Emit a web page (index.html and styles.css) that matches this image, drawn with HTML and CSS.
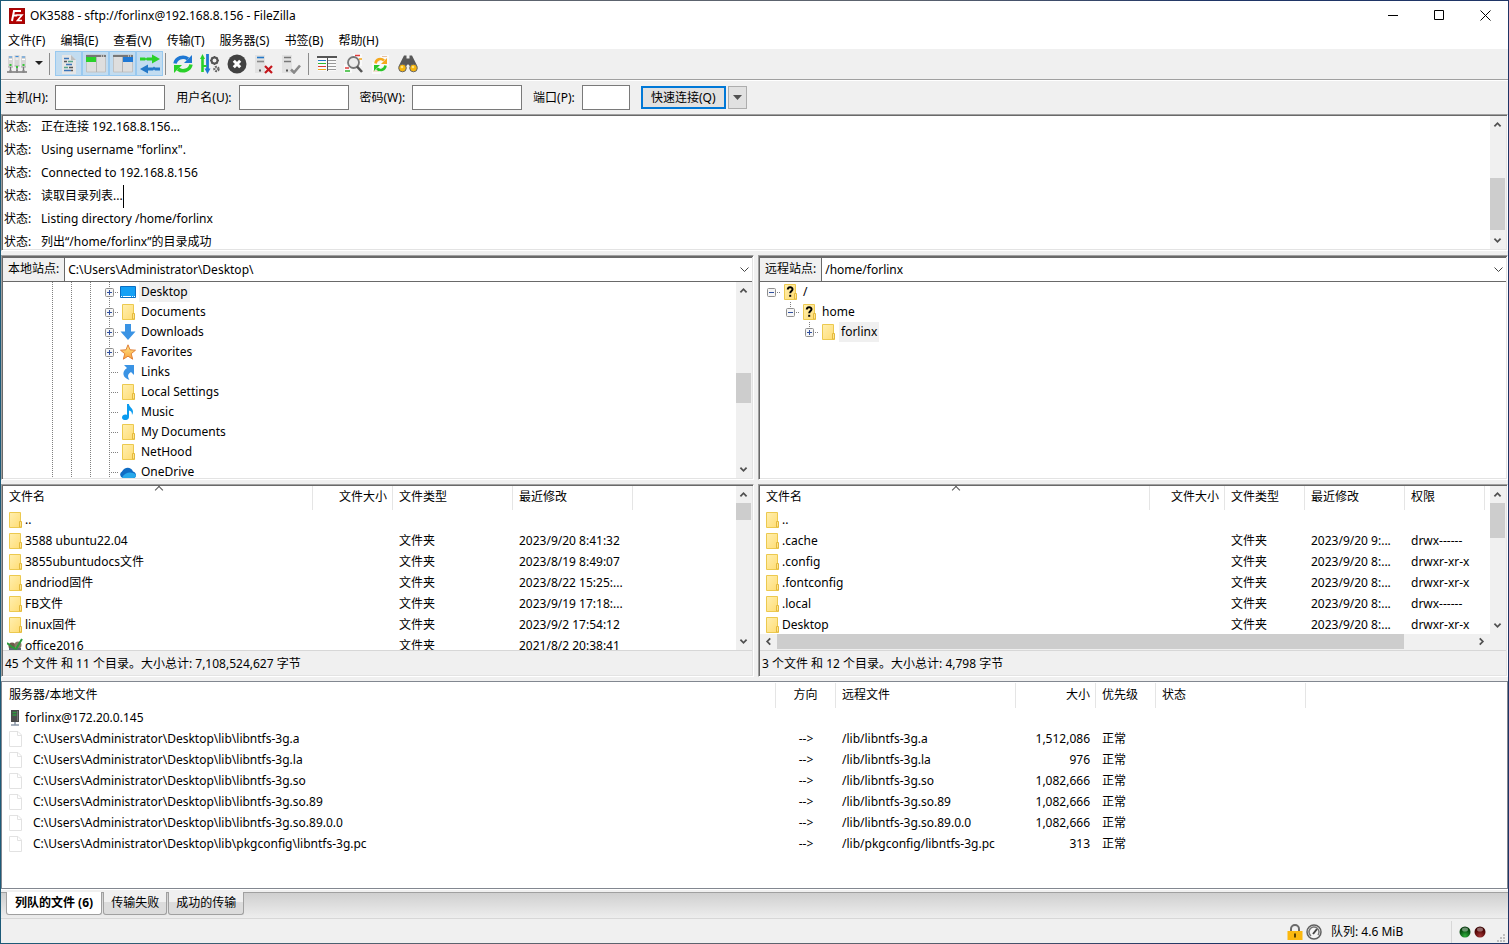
FILE: index.html
```
<!DOCTYPE html>
<html lang="zh-CN">
<head>
  <meta charset="UTF-8" />
  <meta name="viewport" content="width=device-width, initial-scale=1.0"/>
  <title>OK3588 - sftp://forlinx@192.168.8.156 - FileZilla</title>
  <link rel="stylesheet" href="styles.css">
</head>
<body>

  <!-- shared icons -->
  <svg class="defs" width="0" height="0" aria-hidden="true">
    <defs>
      <linearGradient id="gFolder" x1="0" y1="0" x2="1" y2="1">
        <stop offset="0" stop-color="#ffefb0"/><stop offset="1" stop-color="#ffdc72"/>
      </linearGradient>
      <linearGradient id="gStar" x1="0" y1="0" x2="0" y2="1">
        <stop offset="0" stop-color="#ffe98a"/><stop offset="1" stop-color="#f9a13a"/>
      </linearGradient>
      <radialGradient id="gGreen" cx="0.5" cy="0.85" r="0.8">
        <stop offset="0" stop-color="#2fae3c"/><stop offset="0.6" stop-color="#0a5a14"/><stop offset="1" stop-color="#05380b"/>
      </radialGradient>
      <radialGradient id="gRed" cx="0.5" cy="0.85" r="0.8">
        <stop offset="0" stop-color="#a03434"/><stop offset="0.6" stop-color="#5c0a0a"/><stop offset="1" stop-color="#3a0404"/>
      </radialGradient>
      <symbol id="folder" viewBox="0 0 16 16">
        <path d="M2.5.5h11v10h1v5h-12z" fill="url(#gFolder)" stroke="#ecc94f"/>
        <path d="M12.5 15V9.500h2V15z" fill="#ffe590" stroke="#e3b93c"/>
      </symbol>
      <symbol id="unknown" viewBox="0 0 16 16">
        <path d="M2.500.5h11v10h1v5h-12z" fill="url(#gFolder)" stroke="#ecc94f"/>
        <path d="M12.500 15V9.500h2V15z" fill="#ffe590" stroke="#e3b93c"/>
        <path d="M5.800 5.500C5.800 2.500 10.500 2.500 10.500 5.200 10.500 7 8.200 7 8.200 9.300" fill="none" stroke="#000" stroke-width="2"/>
        <path d="M7.200 10.800h2v2h-2z"/>
      </symbol>
      <symbol id="file" viewBox="0 0 16 16">
        <path d="M2.500.5h8.500l3.500 3.500v11.500h-12z" fill="#fff" stroke="#e2e2e2"/>
        <path d="M10.500.5v4h4" fill="none" stroke="#e2e2e2"/>
      </symbol>
      <symbol id="up" viewBox="0 0 17 17"><path d="M5 10.500l3.500-3.500 3.500 3.500" fill="none" stroke="#505050" stroke-width="2"/></symbol>
      <symbol id="down" viewBox="0 0 17 17"><path d="M5 6.500l3.500 3.500 3.500-3.500" fill="none" stroke="#505050" stroke-width="2"/></symbol>
      <symbol id="left" viewBox="0 0 17 17"><path d="M10.500 5l-3.500 3.500 3.500 3.500" fill="none" stroke="#505050" stroke-width="2"/></symbol>
      <symbol id="right" viewBox="0 0 17 17"><path d="M6.500 5l3.500 3.500-3.500 3.500" fill="none" stroke="#505050" stroke-width="2"/></symbol>
      <symbol id="plus" viewBox="0 0 9 9">
        <rect x=".5" y=".5" width="8" height="8" rx="1" fill="#f6f6f6" stroke="#8f8f8f"/>
        <path d="M2 4.500h5M4.500 2v5" stroke="#2f4f9f"/>
      </symbol>
      <symbol id="minus" viewBox="0 0 9 9">
        <rect x=".5" y=".5" width="8" height="8" rx="1" fill="#f6f6f6" stroke="#8f8f8f"/>
        <path d="M2 4.500h5" stroke="#2f4f9f"/>
      </symbol>
    </defs>
  </svg>

  <header class="titlebar">
    <svg class="logo" width="16" height="16" viewBox="0 0 16 16">
      <rect width="16" height="16" fill="#b30000"/>
      <rect x=".5" y=".5" width="15" height="15" fill="none" stroke="#8a1010" stroke-dasharray="1 1"/>
      <path d="M3 13L5 3h7M4.200 7.500h4" fill="none" stroke="#fff" stroke-width="2"/>
      <path d="M7.500 7h5.500L8.500 12.500h4.500" fill="none" stroke="#fff" stroke-width="1.600"/>
    </svg>
    <h1>OK3588 - sftp://forlinx@192.168.8.156 - FileZilla</h1>
    <div class="window-buttons">
      <button aria-label="最小化"><svg width="11" height="11"><path d="M0 5.500h10" stroke="#000"/></svg></button>
      <button aria-label="最大化"><svg width="11" height="11"><path d="M.5.5h9v9h-9z" fill="none" stroke="#000"/></svg></button>
      <button aria-label="关闭"><svg width="11" height="11"><path d="M.5.5l10 10M10.500.5l-10 10" stroke="#000"/></svg></button>
    </div>
  </header>

  <nav class="menubar">
    <button>文件(F)</button>
    <button>编辑(E)</button>
    <button>查看(V)</button>
    <button>传输(T)</button>
    <button>服务器(S)</button>
    <button>书签(B)</button>
    <button>帮助(H)</button>
  </nav>

  <div class="toolbar">
    <button aria-label="站点管理器">
      <svg width="20" height="20" viewBox="0 0 20 20">
        <path d="M1 2h5v11H1zM7.500 1h5v11h-5zM14 2h5v11h-5z" fill="#d6d6d6"/>
        <path d="M2 3h3M8.500 2.500h3M15 3h3" stroke="#3b8ede"/>
        <path d="M2 5.500h3M8.500 5h3M15 5.500h3" stroke="#fff"/>
        <path d="M1 13h5M7.500 12h5M14 13h5" stroke="#a9a9a9"/>
        <path d="M3.500 13v5M10 12v6M16.500 13v5M0 18h20" stroke="#777" stroke-width="1.400"/>
        <path d="M3.500 10v2M10 12v2M16.500 10v2" stroke="#35c435" stroke-width="2"/>
        <path d="M2.500 16h2v3h-2zM9 16h2v3H9zM15.500 16h2v3h-2z" fill="#888"/>
      </svg>
    </button>
    <button class="drop" aria-label="打开站点列表"><svg width="8" height="5"><path d="M0 0h8L4 4z" fill="#222"/></svg></button>
    <span class="sep"></span>
    <div class="toggles">
      <button class="on" aria-label="消息日志">
        <svg width="20" height="20" viewBox="0 0 20 20">
          <path d="M3 1h9l5 5v14H3z" fill="#e6e6e6"/><path d="M12 1l5 5h-5z" fill="#bdbdbd"/>
          <path d="M5 4.500h5M7 10.500h6M5 16.500h7" stroke="#3b74b8" stroke-width="1.500"/>
          <path d="M5 7.500h3M10 13.500h4" stroke="#555" stroke-width="1.500"/>
          <path d="M9 7.500h5M5 13.500h4" stroke="#58a68c" stroke-width="1.500"/>
          <path d="M12 16.500h2" stroke="#555" stroke-width="1.500"/>
        </svg>
      </button>
      <button class="on" aria-label="本地目录树">
        <svg width="20" height="20" viewBox="0 0 20 20">
          <path d="M.5 1h19v17H.5z" fill="#dedede" stroke="#c2c2c2"/><path d="M0 1h20v2H0z" fill="#777"/>
          <path d="M15 2h1M17 2h1" stroke="#fff"/><path d="M0 3h10v5H0z" fill="#2ad12a"/><path d="M10.500 3v15" stroke="#b4b4b4"/>
        </svg>
      </button>
      <button class="on" aria-label="远程目录树">
        <svg width="20" height="20" viewBox="0 0 20 20">
          <path d="M.5 1h19v17H.5z" fill="#dedede" stroke="#c2c2c2"/><path d="M0 1h20v2H0z" fill="#777"/>
          <path d="M15 2h1M17 2h1" stroke="#fff"/><path d="M10 3h10v5H10z" fill="#1f78d4"/><path d="M9.500 3v15" stroke="#b4b4b4"/>
        </svg>
      </button>
      <button class="on" aria-label="传输队列">
        <svg width="20" height="20" viewBox="0 0 20 20">
          <path d="M0 3.500h5l1 1 1-1h5V.5l8 4.500-8 4.500v-3H7l-1-1-1 1H0z" fill="#2ad12a"/>
          <path d="M20 13.500h-5l-1-1-1 1H8v-3L0 15l8 4.500v-3h5l1-1 1 1h5z" fill="#2478c8"/>
        </svg>
      </button>
    </div>
    <span class="sep"></span>
    <button aria-label="刷新">
      <svg width="20" height="20" viewBox="0 0 20 20">
        <path d="M2 9.500A8 7.500 0 0 1 15 5" fill="none" stroke="#1f78d4" stroke-width="3.500"/><path d="M19 1v8h-8z" fill="#1f78d4"/>
        <path d="M18 10.500A8 7.500 0 0 1 5 15" fill="none" stroke="#2ad12a" stroke-width="3.500"/><path d="M1 19v-8h8z" fill="#2ad12a"/>
      </svg>
    </button>
    <button aria-label="处理队列">
      <svg width="20" height="20" viewBox="0 0 20 20">
        <path d="M2.500 3v15" stroke="#2ad12a" stroke-width="2.600"/><path d="M0 5l2.500-5L5 5z" fill="#2ad12a"/>
        <path d="M7.500 0v17" stroke="#1f78d4" stroke-width="2.800"/><path d="M4.500 14.500h6L7.500 20z" fill="#1f78d4"/>
        <path d="M2.500 12h4" stroke="#2ad12a" stroke-width="2"/>
        <circle cx="14.500" cy="6.500" r="3" fill="none" stroke="#555" stroke-width="2"/>
        <path d="M14.500 2v2M14.500 9v2M10 6.500h2M17 6.500h2M11.500 3.500l1.500 1.500M16 8l1.500 1.500M17.500 3.500L16 5M13 8l-1.500 1.500" stroke="#555" stroke-width="1.500"/>
        <circle cx="16.500" cy="15" r="2" fill="none" stroke="#666" stroke-width="2.400" stroke-dasharray="1.600 .8"/>
      </svg>
    </button>
    <button aria-label="取消">
      <svg width="20" height="20" viewBox="0 0 20 20">
        <circle cx="10" cy="10" r="9.500" fill="#424242"/>
        <path d="M6.800 6.800l6.400 6.400M13.200 6.800l-6.400 6.400" stroke="#fff" stroke-width="3"/>
      </svg>
    </button>
    <button aria-label="断开连接">
      <svg width="20" height="20" viewBox="0 0 20 20">
        <path d="M1 1h10v18H1z" fill="#e2e2e2"/><path d="M3 3.500h7" stroke="#2478c8" stroke-width="1.600"/><path d="M3 7.500h7" stroke="#888" stroke-width="1.600"/>
        <path d="M5 16.500h2" stroke="#555" stroke-width="2"/>
        <path d="M11 12l7 7M18 12l-7 7" stroke="#c4161c" stroke-width="2.200"/>
      </svg>
    </button>
    <button aria-label="重新连接">
      <svg width="20" height="20" viewBox="0 0 20 20">
        <path d="M1 1h10v18H1z" fill="#e2e2e2"/><path d="M3 3.500h7M3 7.500h7" stroke="#777" stroke-width="1.600"/>
        <path d="M5 16.500h2" stroke="#555" stroke-width="2"/>
        <path d="M10 15.500l3 3 6-7" fill="none" stroke="#8a8a8a" stroke-width="2.600"/>
      </svg>
    </button>
    <span class="sep wide"></span>
    <button aria-label="文件名过滤器">
      <svg width="20" height="20" viewBox="0 0 20 20">
        <path d="M1 3h18v14H1z" fill="#fafafa"/><path d="M0 2h20v2H0z" fill="#555"/>
        <path d="M1 6.500h8" stroke="#2478c8"/><path d="M1 9.500h8" stroke="#2fb92f"/>
        <path d="M1 12.500h8" stroke="#d83a3a"/><path d="M1 15.500h8" stroke="#f2a71b"/>
        <path d="M10.500 3v14" stroke="#555"/><path d="M11 6.500h8M11 9.500h8M11 12.500h8M11 15.500h8" stroke="#999"/>
      </svg>
    </button>
    <button aria-label="目录比较">
      <svg width="20" height="20" viewBox="0 0 20 20">
        <path d="M9 0h9v12H9zM0 10h8v9H0z" fill="#fafafa"/>
        <path d="M11 1.500h5" stroke="#e03b3b" stroke-width="1.500"/><path d="M15 5h3" stroke="#f2a71b" stroke-width="1.500"/>
        <path d="M1 14h4" stroke="#e03b3b" stroke-width="1.500"/><path d="M1 17h5" stroke="#2fb92f" stroke-width="1.500"/>
        <circle cx="9.500" cy="8.500" r="5.500" fill="#ececec" stroke="#777" stroke-width="1.800"/>
        <path d="M13 12.500l5 5.500" stroke="#555" stroke-width="2.600"/>
      </svg>
    </button>
    <button aria-label="同步浏览">
      <svg width="20" height="20" viewBox="0 0 20 20">
        <path d="M9 1h9v12H9zM1 8h9v12H1z" fill="#fafafa"/>
        <path d="M11 2.500h5M2 17h6" stroke="#e8c0a0"/>
        <path d="M4.500 9.500A5 5 0 0 1 13 6.500" fill="none" stroke="#f5a81c" stroke-width="2.600"/><path d="M16 4v6h-6z" fill="#f5a81c"/>
        <path d="M14.500 11.500A5 5 0 0 1 6 14.500" fill="none" stroke="#2ac72a" stroke-width="2.600"/><path d="M3 17v-6h6z" fill="#2ac72a"/>
      </svg>
    </button>
    <button aria-label="查找文件">
      <svg width="20" height="20" viewBox="0 0 20 20">
        <path d="M6 1.500h2.500v3h3v-3H14l5.500 11-5 3-4-5h-1l-4 5-5-3z" fill="#585858"/>
        <circle cx="4.500" cy="14" r="3.800" fill="#f7b50c" stroke="#666"/><circle cx="15.500" cy="14" r="3.800" fill="#f7b50c" stroke="#666"/>
        <circle cx="4" cy="13" r="1.300" fill="#ffe27a"/><circle cx="15" cy="13" r="1.300" fill="#ffe27a"/>
      </svg>
    </button>
  </div>

  <form class="quickconnect">
    <label for="host">主机(H):</label>
    <input type="text" id="host" name="host" />
    <label for="user">用户名(U):</label>
    <input type="text" id="user" name="user" />
    <label for="pass">密码(W):</label>
    <input type="password" id="pass" name="pass" />
    <label for="port">端口(P):</label>
    <input type="text" id="port" name="port" class="port" />
    <button type="button" class="connect">快速连接(Q)</button>
    <button type="button" class="history" aria-label="历史记录"><svg width="9" height="5"><path d="M0 0h9L4.500 5z" fill="#505050"/></svg></button>
  </form>

  <main class="panes">
    <section class="sunken log">
      <div class="log-lines">
        <p><span>状态:</span>正在连接 192.168.8.156...</p>
        <p><span>状态:</span>Using username "forlinx".</p>
        <p><span>状态:</span>Connected to 192.168.8.156</p>
        <p><span>状态:</span>读取目录列表...<i class="caret"></i></p>
        <p><span>状态:</span>Listing directory /home/forlinx</p>
        <p><span>状态:</span>列出“/home/forlinx”的目录成功</p>
      </div>
      <div class="scroll">
        <svg><use href="#up"/></svg>
        <div class="track log-track"><b></b></div>
        <svg><use href="#down"/></svg>
      </div>
    </section>

    <div class="split trees">
      <section class="sunken site">
        <div class="path">
          <label for="localPath">本地站点:</label>
          <select id="localPath"><option>C:\Users\Administrator\Desktop\</option></select>
        </div>
        <div class="site-body">
          <ul class="tree local-tree">
            <li><i></i><i></i><i></i><i class="node"><svg><use href="#plus"/></svg></i>
              <svg class="icon" viewBox="0 0 16 16"><path d="M.5 2.500h15v11H.5z" fill="#14a0f5" stroke="#0b6fc4"/><path d="M1 12.500h14" stroke="#fff" stroke-dasharray="1 1 8 1"/></svg>
              <span class="selected">Desktop</span></li>
            <li><i></i><i></i><i></i><i class="node"><svg><use href="#plus"/></svg></i>
              <svg class="icon"><use href="#folder"/></svg><span>Documents</span></li>
            <li><i></i><i></i><i></i><i class="node"><svg><use href="#plus"/></svg></i>
              <svg class="icon" viewBox="0 0 16 16"><path d="M5 0h6v7.500h4.500L8 16 .5 7.500H5z" fill="#3a93e4"/></svg><span>Downloads</span></li>
            <li><i></i><i></i><i></i><i class="node"><svg><use href="#plus"/></svg></i>
              <svg class="icon" viewBox="0 0 16 16"><path d="M8 .8l2 5 5.500.4-4.300 3.500 1.500 5.500L8 12.200l-4.700 3 1.500-5.500L.5 6.200 6 5.800z" fill="url(#gStar)" stroke="#e0803a"/></svg><span>Favorites</span></li>
            <li><i></i><i></i><i></i><i class="node"></i>
              <svg class="icon" viewBox="0 0 16 16"><path d="M4 1h10v10l-3-3c-3 2-4 4-1.500 8C3 14 1 8 7 4z" fill="#3a93e4"/></svg><span>Links</span></li>
            <li><i></i><i></i><i></i><i class="node"></i>
              <svg class="icon"><use href="#folder"/></svg><span>Local Settings</span></li>
            <li><i></i><i></i><i></i><i class="node"></i>
              <svg class="icon" viewBox="0 0 16 16"><path d="M7 0h2c0 3 4 4 4 8 0 1-.5 2-1 3 0-3-1-4-3-4.500V13c0 4-7 4-7 .5C2 11 5 10 7 11z" fill="#0c9cf0"/></svg><span>Music</span></li>
            <li><i></i><i></i><i></i><i class="node"></i>
              <svg class="icon"><use href="#folder"/></svg><span>My Documents</span></li>
            <li><i></i><i></i><i></i><i class="node"></i>
              <svg class="icon"><use href="#folder"/></svg><span>NetHood</span></li>
            <li><i></i><i></i><i></i><i class="node"></i>
              <svg class="icon" viewBox="0 0 16 16"><path d="M3 14a3.500 3.500 0 0 1-1-6.500C4 3 11 2 13 7.500c4 1 4 6.500 0 6.500z" fill="#0f6cc4"/><path d="M2 13.500C5 8 12 7 16 11c0 2-1 3-3 3H3z" fill="#28a8ea"/></svg><span>OneDrive</span></li>
          </ul>
          <div class="scroll">
            <svg><use href="#up"/></svg>
            <div class="track tree-track"><b></b></div>
            <svg><use href="#down"/></svg>
          </div>
        </div>
      </section>

      <section class="sunken site">
        <div class="path">
          <label for="remotePath">远程站点:</label>
          <select id="remotePath"><option>/home/forlinx</option></select>
        </div>
        <div class="site-body">
          <ul class="tree remote-tree">
            <li><i class="node first"><svg><use href="#minus"/></svg></i><svg class="icon"><use href="#unknown"/></svg><span>/</span></li>
            <li><i class="blank"></i><i class="node last"><svg><use href="#minus"/></svg></i><svg class="icon"><use href="#unknown"/></svg><span>home</span></li>
            <li><i class="blank"></i><i class="blank"></i><i class="node last"><svg><use href="#plus"/></svg></i><svg class="icon"><use href="#folder"/></svg><span class="selected">forlinx</span></li>
          </ul>
        </div>
      </section>
    </div>

    <div class="split lists">
      <section class="sunken list">
        <div class="list-body">
          <div class="list-view">
            <table>
              <colgroup><col class="w310"><col class="w80"><col class="w120"><col class="w120"><col></colgroup>
              <thead>
                <tr><th class="sorted">文件名</th><th class="num">文件大小</th><th>文件类型</th><th>最近修改</th><th></th></tr>
              </thead>
              <tbody>
                <tr><td><svg class="icon"><use href="#folder"/></svg>..</td><td></td><td></td><td></td><td></td></tr>
                <tr><td><svg class="icon"><use href="#folder"/></svg>3588 ubuntu22.04</td><td></td><td>文件夹</td><td>2023/9/20 8:41:32</td><td></td></tr>
                <tr><td><svg class="icon"><use href="#folder"/></svg>3855ubuntudocs文件</td><td></td><td>文件夹</td><td>2023/8/19 8:49:07</td><td></td></tr>
                <tr><td><svg class="icon"><use href="#folder"/></svg>andriod固件</td><td></td><td>文件夹</td><td>2023/8/22 15:25:...</td><td></td></tr>
                <tr><td><svg class="icon"><use href="#folder"/></svg>FB文件</td><td></td><td>文件夹</td><td>2023/9/19 17:18:...</td><td></td></tr>
                <tr><td><svg class="icon"><use href="#folder"/></svg>linux固件</td><td></td><td>文件夹</td><td>2023/9/2 17:54:12</td><td></td></tr>
                <tr><td><svg class="icon" viewBox="0 0 16 16"><circle cx="5" cy="8" r="3.500" fill="#6f5a4a"/><circle cx="11" cy="7" r="3.500" fill="#8a7a68"/><path d="M2 10h12v5H2z" fill="#5a6a78"/><path d="M0 5l5 4 4 2 6-10" fill="none" stroke="#2c9a3c" stroke-width="2"/></svg>office2016</td><td></td><td>文件夹</td><td>2021/8/2 20:38:41</td><td></td></tr>
              </tbody>
            </table>
          </div>
          <div class="scroll">
            <svg><use href="#up"/></svg>
            <div class="track local-track"><b></b></div>
            <svg><use href="#down"/></svg>
          </div>
        </div>
        <p class="summary">45 个文件 和 11 个目录。大小总计: 7,108,524,627 字节</p>
      </section>

      <section class="sunken list">
        <div class="list-body">
          <div class="list-view">
            <table>
              <colgroup><col class="w390"><col class="w75"><col class="w80"><col class="w100"><col class="w80"><col></colgroup>
              <thead>
                <tr><th class="sorted">文件名</th><th class="num">文件大小</th><th>文件类型</th><th>最近修改</th><th>权限</th><th></th></tr>
              </thead>
              <tbody>
                <tr><td><svg class="icon"><use href="#folder"/></svg>..</td><td></td><td></td><td></td><td></td><td></td></tr>
                <tr><td><svg class="icon"><use href="#folder"/></svg>.cache</td><td></td><td>文件夹</td><td>2023/9/20 9:...</td><td>drwx------</td><td></td></tr>
                <tr><td><svg class="icon"><use href="#folder"/></svg>.config</td><td></td><td>文件夹</td><td>2023/9/20 8:...</td><td>drwxr-xr-x</td><td></td></tr>
                <tr><td><svg class="icon"><use href="#folder"/></svg>.fontconfig</td><td></td><td>文件夹</td><td>2023/9/20 8:...</td><td>drwxr-xr-x</td><td></td></tr>
                <tr><td><svg class="icon"><use href="#folder"/></svg>.local</td><td></td><td>文件夹</td><td>2023/9/20 8:...</td><td>drwx------</td><td></td></tr>
                <tr><td><svg class="icon"><use href="#folder"/></svg>Desktop</td><td></td><td>文件夹</td><td>2023/9/20 8:...</td><td>drwxr-xr-x</td><td></td></tr>
              </tbody>
            </table>
          </div>
          <div class="scroll">
            <svg><use href="#up"/></svg>
            <div class="track remote-track"><b></b></div>
            <svg><use href="#down"/></svg>
          </div>
        </div>
        <div class="scroll horizontal">
          <svg><use href="#left"/></svg>
          <div class="track bottom-track"><b></b></div>
          <svg><use href="#right"/></svg>
        </div>
        <p class="summary">3 个文件 和 12 个目录。大小总计: 4,798 字节</p>
      </section>
    </div>

    <section class="queue">
      <table>
        <colgroup><col class="w774"><col class="w60"><col class="w180"><col class="w80"><col class="w60"><col class="w150"><col></colgroup>
        <thead>
          <tr><th>服务器/本地文件</th><th class="mid">方向</th><th>远程文件</th><th class="num">大小</th><th>优先级</th><th>状态</th><th></th></tr>
        </thead>
        <tbody>
          <tr><td colspan="7"><svg class="icon" viewBox="0 0 16 16"><path d="M4 0h8v12H4z" fill="#4c4c4c"/><path d="M5.500 2.500h4M5.500 5h4" stroke="#2f9a3f" stroke-width="1.400"/><path d="M10.500 1v10" stroke="#777"/><path d="M8 12v3M4 15h8" stroke="#8b98a8" stroke-width="1.500"/></svg>forlinx@172.20.0.145</td></tr>
          <tr class="file"><td><svg class="icon"><use href="#file"/></svg>C:\Users\Administrator\Desktop\lib\libntfs-3g.a</td><td class="mid">--&gt;</td><td>/lib/libntfs-3g.a</td><td class="num">1,512,086</td><td>正常</td><td></td><td></td></tr>
          <tr class="file"><td><svg class="icon"><use href="#file"/></svg>C:\Users\Administrator\Desktop\lib\libntfs-3g.la</td><td class="mid">--&gt;</td><td>/lib/libntfs-3g.la</td><td class="num">976</td><td>正常</td><td></td><td></td></tr>
          <tr class="file"><td><svg class="icon"><use href="#file"/></svg>C:\Users\Administrator\Desktop\lib\libntfs-3g.so</td><td class="mid">--&gt;</td><td>/lib/libntfs-3g.so</td><td class="num">1,082,666</td><td>正常</td><td></td><td></td></tr>
          <tr class="file"><td><svg class="icon"><use href="#file"/></svg>C:\Users\Administrator\Desktop\lib\libntfs-3g.so.89</td><td class="mid">--&gt;</td><td>/lib/libntfs-3g.so.89</td><td class="num">1,082,666</td><td>正常</td><td></td><td></td></tr>
          <tr class="file"><td><svg class="icon"><use href="#file"/></svg>C:\Users\Administrator\Desktop\lib\libntfs-3g.so.89.0.0</td><td class="mid">--&gt;</td><td>/lib/libntfs-3g.so.89.0.0</td><td class="num">1,082,666</td><td>正常</td><td></td><td></td></tr>
          <tr class="file"><td><svg class="icon"><use href="#file"/></svg>C:\Users\Administrator\Desktop\lib\pkgconfig\libntfs-3g.pc</td><td class="mid">--&gt;</td><td>/lib/pkgconfig/libntfs-3g.pc</td><td class="num">313</td><td>正常</td><td></td><td></td></tr>
        </tbody>
      </table>
    </section>
  </main>

  <div class="tabs">
    <button class="active">列队的文件 (6)</button>
    <button>传输失败</button>
    <button>成功的传输</button>
  </div>

  <footer class="statusbar">
    <svg width="16" height="16" viewBox="0 0 16 16">
      <path d="M4 8V5a4 4 0 0 1 8 0v3" fill="none" stroke="#6a6a6a" stroke-width="2"/>
      <path d="M.5 7h15v9H.5z" fill="#fbb80f"/><path d="M8 9.500v4" stroke="#5a4200" stroke-width="2"/>
    </svg>
    <svg width="16" height="16" viewBox="0 0 16 16">
      <circle cx="8" cy="8" r="7" fill="#f4f4f4" stroke="#606060" stroke-width="1.500"/>
      <path d="M5 12A5 5 0 1 1 12 11" fill="none" stroke="#777" stroke-width="1.500"/>
      <path d="M7 10l4-5" stroke="#444" stroke-width="2"/>
    </svg>
    <span class="queue-size">队列: 4.6 MiB</span>
    <div class="leds">
      <svg width="12" height="12" viewBox="0 0 12 12"><circle cx="6" cy="6" r="5.500" fill="url(#gGreen)"/><ellipse cx="6" cy="3.500" rx="3" ry="2" fill="#fff" opacity=".4"/></svg>
      <svg width="12" height="12" viewBox="0 0 12 12"><circle cx="6" cy="6" r="5.500" fill="url(#gRed)"/><ellipse cx="6" cy="3.500" rx="3" ry="2" fill="#fff" opacity=".4"/></svg>
    </div>
    <svg class="grip" width="9" height="9"><path d="M6 0h2v2H6zM3 3h2v2H3zM6 3h2v2H6zM0 6h2v2H0zM3 6h2v2H3zM6 6h2v2H6z" fill="#bfbfbf"/></svg>
  </footer>

</body>
</html>
```

FILE: styles.css
```
* {
  box-sizing: border-box;
}
body {
  margin: 0;
  padding: 1px;
  height: 100vh;
  display: flex;
  flex-direction: column;
  overflow: hidden;
  font-family: "Noto Sans", "Noto Sans CJK SC", sans-serif;
  font-size: 12px;
  line-height: 16px;
  color: #000;
  background: linear-gradient(to right, #1c5a78, #5c636e 30%, #5c636e 60%, #1f3566 80%);
}
p, h1, ul {
  margin: 0;
  padding: 0;
}
button, input, select {
  font: inherit;
  color: inherit;
  border: none;
  border-radius: 0;
  padding: 0;
  background: none;
}
svg {
  display: block;
  flex: none;
}
.defs {
  position: absolute;
}
.icon {
  width: 16px;
  height: 16px;
}

/* title and menu */
.titlebar {
  display: flex;
  align-items: center;
  height: 29px;
  padding-left: 8px;
  background: #fff;
}
.titlebar h1 {
  flex: 1;
  margin-left: 5px;
  font-size: 12px;
  font-weight: normal;
}
.window-buttons {
  display: flex;
}
.window-buttons button {
  width: 46px;
  display: flex;
  justify-content: center;
}
.menubar {
  display: flex;
  gap: 15px;
  height: 19px;
  padding: 2px 0 0 7px;
  background: #fff;
}
.menubar button {
  white-space: nowrap;
}

/* toolbar */
.toolbar {
  display: flex;
  align-items: center;
  height: 32px;
  padding: 0 0 2px 2px;
  background: #f0f0f0;
  border-bottom: 1px solid #fff;
  box-shadow: inset 0 -1px #a0a0a0;
}
.toolbar button {
  width: 27px;
  height: 25px;
  display: flex;
  align-items: center;
  justify-content: center;
}
.toolbar .drop {
  width: 17px;
}
.toolbar .sep {
  width: 1px;
  height: 22px;
  margin: 0 3px 0 2px;
  background: #8c8c8c;
}
.toolbar .wide {
  margin: 0 4px;
}
.toggles {
  display: flex;
  margin-left: 2px;
}
.toolbar .on {
  background: #c2dcf0;
  border: 1px solid #99c9ef;
}

/* quickconnect */
.quickconnect {
  display: flex;
  align-items: center;
  height: 33px;
  padding-left: 4px;
  background: #f0f0f0;
}
.quickconnect label {
  margin-right: 7px;
  white-space: nowrap;
}
.quickconnect input {
  width: 110px;
  height: 25px;
  margin-right: 11px;
  padding: 0 4px;
  background: #fff;
  border: 1px solid #7a7a7a;
}
.quickconnect .port {
  width: 48px;
}
.connect {
  width: 85px;
  height: 23px;
  background: #e1e1e1;
  border: 2px solid #0078d7;
}
.history {
  width: 19px;
  height: 23px;
  margin-left: 2px;
  display: flex;
  align-items: center;
  justify-content: center;
  background: #e1e1e1;
  border: 1px solid #adadad;
}

/* panes */
.panes {
  flex: 1;
  min-height: 0;
  display: flex;
  flex-direction: column;
  gap: 4px;
  background: #f0f0f0;
}
.sunken {
  min-width: 0;
  min-height: 0;
  background: #fff;
  border: 1px solid;
  border-color: #a0a0a0 #fff #fff #a0a0a0;
  padding: 1px;
  box-shadow: inset 1px 1px #696969, inset -1px -1px #e3e3e3;
}
.log {
  flex: 133 1 0;
  display: flex;
}
.log-lines {
  flex: 1;
  overflow: hidden;
  line-height: 21px;
}
.log-lines p {
  display: flex;
  height: 23px;
  padding-left: 1px;
}
.log-lines span {
  width: 37px;
}
.caret {
  width: 1px;
  background: #000;
}
.split {
  display: grid;
  grid-template-columns: 753fr 750fr;
  gap: 4px;
  min-height: 0;
}
.trees {
  flex: 225 1 0;
}
.lists {
  flex: 193 1 0;
}

/* scrollbars */
.scroll {
  display: flex;
  flex-direction: column;
  width: 16px;
  background: #f0f0f0;
}
.scroll svg {
  width: 15px;
  height: 17px;
}
.track {
  flex: 1;
  display: flex;
  flex-direction: column;
}
.track b {
  width: 15px;
  background: #cdcdcd;
}
.track::before,
.track::after {
  content: "";
}
.log-track::before { flex: 45; }
.log-track b { flex: 52; }
.log-track::after { flex: 2; }
.tree-track::before { flex: 74; }
.tree-track b { flex: 30; }
.tree-track::after { flex: 58; }
.local-track b { flex: 17; }
.local-track::after { flex: 113; }
.remote-track b { flex: 35; }
.remote-track::after { flex: 79; }
.bottom-track b { flex: 626; }
.bottom-track::after { flex: 69; }
.horizontal,
.horizontal .track {
  flex-direction: row;
}
.horizontal {
  width: auto;
  height: 16px;
  padding-right: 16px;
}
.horizontal svg {
  width: 17px;
  height: 15px;
}
.horizontal .track b {
  height: 15px;
}

/* site trees */
.site,
.list {
  display: flex;
  flex-direction: column;
}
.path {
  display: flex;
  height: 25px;
  border-top: 1px solid #696969;
  border-bottom: 1px solid #696969;
}
.path label {
  padding: 3px 5px 0 5px;
  background: #f0f0f0;
  border-right: 1px solid #696969;
  white-space: nowrap;
}
.path select {
  flex: 1;
  min-width: 0;
  padding-left: 3px;
  appearance: none;
  outline: none;
  background: url("data:image/svg+xml,%3Csvg xmlns='http://www.w3.org/2000/svg' width='9' height='6'%3E%3Cpath d='M.5.5l4 4 4-4' fill='none' stroke='%23444'/%3E%3C/svg%3E") no-repeat right 3px center;
}
.site-body {
  flex: 1;
  min-height: 0;
  display: flex;
}
.tree {
  flex: 1;
  overflow: hidden;
  list-style: none;
}
.tree li {
  display: flex;
  align-items: center;
  height: 20px;
}
.local-tree li {
  padding-left: 40px;
}
.remote-tree li {
  padding-left: 2px;
}
.tree i {
  width: 19px;
  height: 20px;
  flex: none;
  background: repeating-linear-gradient(#808080 0 1px, transparent 1px 2px) 9px 0 / 1px 100% no-repeat;
}
.tree .node {
  display: flex;
  align-items: center;
  justify-content: center;
  background:
    repeating-linear-gradient(#808080 0 1px, transparent 1px 2px) 9px 0 / 1px 100% no-repeat,
    repeating-linear-gradient(to right, #808080 0 1px, transparent 1px 2px) 9px 10px / 10px 1px no-repeat;
}
.tree .last {
  background-size: 1px 10px, 10px 1px;
}
.tree .first {
  background-size: 0 0, 10px 1px;
}
.tree .blank {
  background: none;
}
.tree i svg {
  width: 9px;
  height: 9px;
}
.tree .icon {
  margin: 0 3px 0 1px;
}
.tree span {
  height: 20px;
  padding: 2px;
}
.tree .selected {
  background: #f0f0f0;
}

/* tables */
.list-body {
  flex: 1;
  min-height: 0;
  display: flex;
}
.list-view {
  flex: 1;
  min-width: 0;
  overflow: hidden;
}
table {
  width: 100%;
  table-layout: fixed;
  border-collapse: separate;
  border-spacing: 0;
}
th, td {
  padding: 0 6px 1px;
  text-align: left;
  font-weight: normal;
  white-space: nowrap;
  overflow: hidden;
}
th {
  position: relative;
  height: 24px;
  padding-bottom: 2px;
  border-right: 1px solid #e5e5e5;
}
th:last-child {
  border-right: none;
}
td {
  height: 21px;
}
td:first-child {
  padding-left: 4px;
}
td .icon {
  display: inline-block;
  vertical-align: top;
  margin-right: 2px;
}
.file .icon {
  margin-right: 10px;
}
.num {
  text-align: right;
  padding-right: 5px;
}
td.num {
  padding-right: 6px;
}
.mid {
  text-align: center;
}
.sorted::after {
  content: "";
  position: absolute;
  top: 1px;
  left: 50%;
  width: 5px;
  height: 5px;
  margin-left: -2px;
  border: solid #555;
  border-width: 1px 0 0 1px;
  transform: rotate(45deg);
}
.w60 { width: 60px; }
.w75 { width: 75px; }
.w80 { width: 80px; }
.w100 { width: 100px; }
.w120 { width: 120px; }
.w150 { width: 150px; }
.w180 { width: 180px; }
.w310 { width: 310px; }
.w390 { width: 390px; }
.w774 { width: 774px; }
.summary {
  height: 25px;
  padding: 5px 2px 0;
  background: #f0f0f0;
  border-top: 1px solid #d7d7d7;
}
.queue {
  flex: 205 1 0;
  min-height: 0;
  padding-top: 1px;
  overflow: hidden;
  background: #fff;
  border: 1px solid #828790;
}
.queue th {
  height: 25px;
}
.queue th:first-child {
  padding-left: 7px;
}
.queue td:first-child {
  padding-left: 5px;
}

/* bottom */
.tabs {
  display: flex;
  height: 29px;
  padding: 2px 0 3px 5px;
  border-top: 1px solid #fff;
  background: linear-gradient(#a0a0a0 0 1px, #cfcfcf 1px, #f0f0f0) 0 2px no-repeat #f0f0f0;
}
.tabs button {
  height: 23px;
  padding: 0 7px 1px;
  background: linear-gradient(#f0f0f0 45%, #dcdcdc 45%);
  border: 1px solid #a0a0a0;
  border-top: none;
  border-radius: 0 0 3px 3px;
}
.tabs .active {
  padding: 0 8px 1px;
  font-weight: bold;
  background: #fff;
}
.tabs button + button {
  margin-left: 1px;
}
.statusbar {
  display: flex;
  align-items: center;
  justify-content: flex-end;
  gap: 3px;
  height: 25px;
  padding: 1px 2px 0 0;
  background: #f0f0f0;
  border-top: 1px solid #d7d7d7;
}
.queue-size {
  width: 123px;
  padding-left: 6px;
}
.leds {
  display: flex;
  gap: 3px;
  padding: 5px 8px 5px 7px;
  border-left: 1px solid #d7d7d7;
}
.grip {
  align-self: flex-end;
}
```
